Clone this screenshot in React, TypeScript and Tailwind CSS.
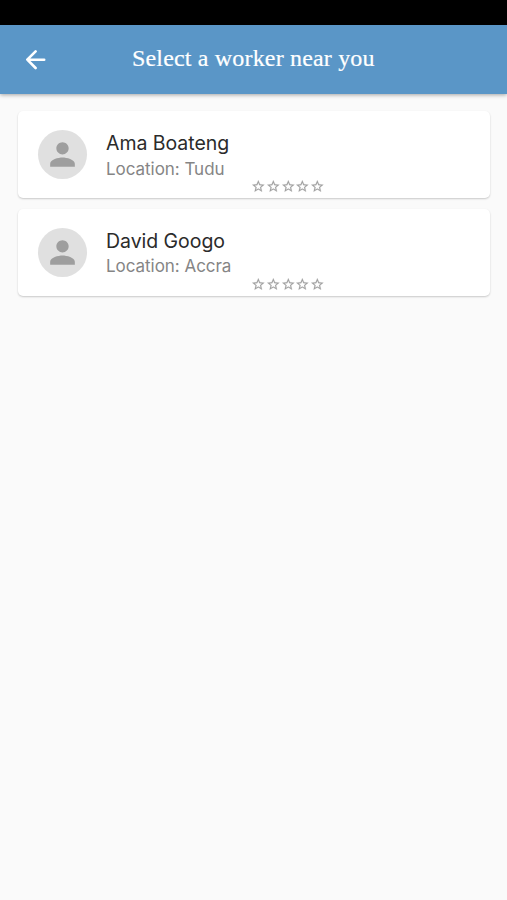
const workers = [
  { name: "Ama Boateng", location: "Tudu" },
  { name: "David Googo", location: "Accra" },
];

function BackArrow() {
  return (
    <svg viewBox="0 0 20 20" className="h-5 w-5" fill="none" stroke="white" strokeWidth="2.6" strokeLinecap="round" strokeLinejoin="round">
      <path d="M18.2 9.7H1.6M9.6 1.4L1.3 9.7l8.3 8.3" />
    </svg>
  );
}

function Avatar() {
  return (
    <div className="flex h-[49px] w-[49px] shrink-0 items-center justify-center rounded-full bg-[#e0e0e0]">
      <svg viewBox="0 0 24 24" className="h-[37px] w-[37px] fill-[#9e9e9e]">
        <path d="M12 12c2.21 0 4-1.79 4-4s-1.79-4-4-4-4 1.79-4 4 1.79 4 4 4zm0 2c-2.67 0-8 1.34-8 4v2h16v-2c0-2.66-5.33-4-8-4z" />
      </svg>
    </div>
  );
}

function Star() {
  return (
    <svg viewBox="0 0 24 24" className="h-[14.65px] w-[14.65px] fill-[#a0a0a0] stroke-[#a0a0a0]" strokeWidth="0.3">
      <path d="M22 9.24l-7.19-.62L12 2 9.19 8.63 2 9.24l5.46 4.73L5.82 21 12 17.27 18.18 21l-1.63-7.03L22 9.24zM12 15.4l-3.76 2.27 1-4.28-3.32-2.88 4.38-.38L12 6.1l1.71 4.04 4.38.38-3.32 2.88 1 4.28L12 15.4z" />
    </svg>
  );
}

function WorkerCard({ worker }: { worker: (typeof workers)[number] }) {
  return (
    <article className="flex h-[87px] flex-col rounded-[5px] bg-white shadow-[0_1px_2px_rgba(0,0,0,0.2)]">
      <div className="flex h-[67px] items-start pl-[19.5px] pt-[19px]">
        <Avatar />
        <div className="ml-[19.5px] flex flex-col whitespace-nowrap pt-px">
          <h2 className="text-[19.5px] leading-6 tracking-[-0.04px] text-[#2b2b2b]">{worker.name}</h2>
          <p className="mt-[1.2px] text-[17px] leading-6 tracking-[-0.04px] text-[#858585]">Location: {worker.location}</p>
        </div>
      </div>
      <div className="ml-[233.4px] flex pt-[0.6px]">
        {[0, 1, 2, 3, 4].map((i) => (
          <Star key={i} />
        ))}
      </div>
    </article>
  );
}

export default function App() {
  return (
    <div className="flex h-[900px] w-[507px] flex-col overflow-hidden bg-[#fafafa] font-['Inter',sans-serif]">
      <div className="h-[25px] shrink-0 bg-black" />
      <header className="flex h-[69px] shrink-0 items-center bg-[#5a96c7] pl-[26px] shadow-[0_1px_4px_rgba(0,0,0,0.35)]">
        <BackArrow />
        <h1 className="mb-[3px] ml-[86px] whitespace-nowrap font-['Liberation_Serif',serif] text-[24px] leading-7 tracking-[0.17px] text-white [-webkit-text-stroke:0.2px_white]">
          Select a worker near you
        </h1>
      </header>
      <main className="flex flex-col gap-[10.6px] pl-[18px] pr-[17px] pt-[17.4px]">
        {workers.map((w) => (
          <WorkerCard key={w.name} worker={w} />
        ))}
      </main>
    </div>
  );
}
